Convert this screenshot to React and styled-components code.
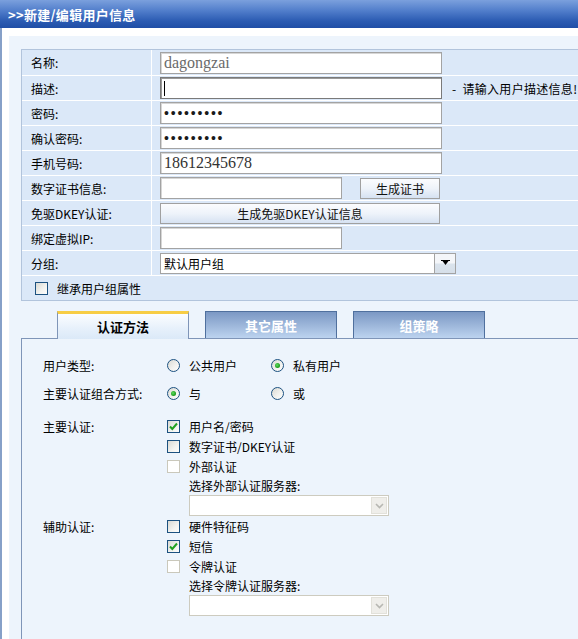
import React from 'react';
import styled, { createGlobalStyle, css } from 'styled-components';

const GlobalStyle = createGlobalStyle`
  html, body {
    margin: 0;
    padding: 0;
    background: #fff;
    overflow: hidden;
  }
  body {
    font-family: "Noto Sans CJK SC", "Liberation Sans", sans-serif;
    font-size: 12px;
    color: #000;
  }
`;

const Page = styled.div`
  width: 578px;
  overflow: hidden;
`;

const Header = styled.div`
  height: 28px;
  display: flex;
  align-items: center;
  padding-left: 8px;
  background: linear-gradient(#7ba0dd 0%, #4f7cca 40%, #2b5bb2 75%, #1f4ea6 100%);
  color: #fff;
  font-weight: bold;
  font-size: 13px;
  letter-spacing: 0.3px;
`;

const Frame = styled.div`
  border-left: 2px solid #86a0c8;
  padding: 8px 0 0 7px;
`;

const Panel = styled.div`
  background: #edf4fc;
  padding: 13px 0 10px 12px;
`;

const FormTable = styled.div`
  border: 1px solid #b2c4dc;
  border-right: none;
  background: #fff;
  display: flex;
  flex-direction: column;
  gap: 1px;
`;

const Row = styled.div`
  display: grid;
  grid-template-columns: ${p => (p.$full ? '1fr' : '129px 1fr')};
  column-gap: 1px;
  height: ${p => p.$h || 24}px;
`;

const LabelCell = styled.div`
  background: #dbe8f8;
  display: flex;
  align-items: center;
  padding-left: 9px;
`;

const ValueCell = styled.div`
  background: #dbe8f8;
  display: flex;
  align-items: center;
  padding-left: ${p => p.$pad ?? 8}px;
  min-width: 0;
`;

const Field = styled.div`
  box-sizing: border-box;
  flex: none;
  width: ${p => p.$w}px;
  height: 22px;
  background: #fff;
  border: 1px solid #a3a3a3;
  box-shadow: inset 1px 1px 0 #d6d6d6;
  display: flex;
  align-items: center;
  padding-left: 3px;
  font-family: "Liberation Serif", serif;
  font-size: 16px;
  color: ${p => p.$color || '#333'};
  ${p => p.$focus && css`
    border-color: #7a7a7a;
    box-shadow: inset 1px 1px 0 #9a9a9a;
  `}
`;

const Caret = styled.span`
  width: 1px;
  height: 15px;
  background: #000;
`;

const Dots = styled.span`
  font-family: "Liberation Sans", sans-serif;
  font-size: 14px;
  letter-spacing: 1.8px;
  color: #1a1a1a;
  line-height: 1;
`;

const Hint = styled.span`
  margin-left: 10px;
  white-space: nowrap;
  word-spacing: 3px;
  letter-spacing: 0.3px;
`;

const Button = styled.div`
  box-sizing: border-box;
  flex: none;
  width: ${p => p.$w}px;
  height: 21px;
  margin-left: ${p => p.$ml || 0}px;
  border: 1px solid #a0a0a0;
  background: linear-gradient(#fbfcfe 0%, #eef3fa 50%, #d6e2f2 100%);
  display: flex;
  align-items: center;
  justify-content: center;
  font-size: 12px;
  color: #111;
`;

const Select = styled.div`
  box-sizing: border-box;
  width: 296px;
  height: 21px;
  display: flex;
  border: 1px solid #a3a3a3;
  background: #fff;
`;

const SelectText = styled.div`
  flex: 1;
  display: flex;
  align-items: center;
  padding-left: 3px;
  font-size: 12px;
  border-right: 1px solid #a3a3a3;
`;

const SelectArrow = styled.div`
  width: 20px;
  display: flex;
  align-items: center;
  justify-content: center;
  background: linear-gradient(#f4f6f9 0%, #f4f6f9 45%, #dae3ec 55%, #d6dfe9 100%);
`;

const Box = styled.span`
  box-sizing: border-box;
  flex: none;
  width: 13px;
  height: 13px;
  border: 1px solid ${p => (p.$disabled ? '#cac8bb' : '#1c5180')};
  background: ${p => (p.$disabled ? '#fff' : 'linear-gradient(135deg, #d9d9d3 0%, #f3f3f0 60%, #fdfdfc 100%)')};
  display: flex;
  align-items: center;
  justify-content: center;
  border-radius: ${p => (p.$round ? '50%' : '0')};
`;

const Dot = styled.span`
  width: 5px;
  height: 5px;
  border-radius: 50%;
  background: radial-gradient(circle at 40% 40%, #5fdc5f 0%, #21a121 60%, #14801a 100%);
`;

const CheckInline = styled.div`
  display: flex;
  align-items: center;
  gap: 9px;
  padding-left: 13px;
  font-size: 12px;
`;

const TabStrip = styled.div`
  display: flex;
  gap: 16px;
  margin: 10px 0 0 36px;
  height: 27px;
`;

const Tab = styled.div`
  box-sizing: border-box;
  flex: none;
  width: 132px;
  height: 27px;
  display: flex;
  align-items: center;
  justify-content: center;
  font-weight: bold;
  font-size: 13px;
  border: 1px solid #50709e;
  border-bottom: none;
  background: linear-gradient(#7b98c4, #bcd3ef);
  color: #fff;
  ${p => p.$active && css`
    height: 28px;
    margin-bottom: -1px;
    position: relative;
    border-color: #7f95b8;
    border-top: 3px solid #f7cd45;
    background: linear-gradient(#fbfdff, #e6f0fb 60%, #dbe9f8);
    color: #000;
  `}
`;

const TabBody = styled.div`
  box-sizing: border-box;
  height: 302px;
  border: 1px solid #7f95b8;
  border-right: none;
  padding: 12px 0 0 21px;
`;

const Section = styled.div`
  display: grid;
  grid-template-columns: 124px 1fr;
  align-items: ${p => (p.$top ? 'start' : 'center')};
  min-height: ${p => p.$h || 0}px;
  margin-top: ${p => p.$mt || 0}px;
`;

const SectionLabel = styled.div`
  height: ${p => (p.$top ? '20px' : 'auto')};
  display: flex;
  align-items: center;
`;

const Options = styled.div`
  display: flex;
`;

const RadioOption = styled.div`
  width: 104px;
  display: flex;
  align-items: center;
  gap: 9px;
`;

const CheckList = styled.div`
  display: flex;
  flex-direction: column;
`;

const CheckRow = styled.div`
  height: 20px;
  display: flex;
  align-items: center;
  gap: 9px;
`;

const SubLabel = styled.div`
  height: 18px;
  display: flex;
  align-items: center;
  padding-left: 22px;
`;

const ServerSelect = styled.div`
  box-sizing: border-box;
  width: 200px;
  height: 21px;
  margin: 1px 0 0 22px;
  border: 1px solid #cdcbbf;
  background: #fff;
  display: flex;
  justify-content: flex-end;
  padding: 1px;
`;

const ServerArrow = styled.div`
  width: 16px;
  background: #efeeea;
  border: 1px solid #e2e1da;
  box-sizing: border-box;
  display: flex;
  align-items: center;
  justify-content: center;
`;

const CheckMark = () => (
  <svg width="11" height="11" viewBox="0 0 11 11">
    <path d="M2 5.5 L4.3 8 L9 2.5" fill="none" stroke="#21a121" strokeWidth="2" />
  </svg>
);

const Check = ({ checked, disabled }) => (
  <Box $disabled={disabled}>{checked && <CheckMark />}</Box>
);

const Radio = ({ checked }) => (
  <Box $round>{checked && <Dot />}</Box>
);

const DownTriangle = () => (
  <svg width="9" height="6" viewBox="0 0 9 6">
    <path d="M0 0 H9 V1 H0 Z M1.5 1 H7.5 L4.5 5 Z" fill="#000" />
  </svg>
);

const Chevron = () => (
  <svg width="9" height="6" viewBox="0 0 9 6">
    <path d="M1 1 L4.5 4.5 L8 1" fill="none" stroke="#b7b7b2" strokeWidth="1.6" />
  </svg>
);

const ServerPicker = () => (
  <ServerSelect>
    <ServerArrow>
      <Chevron />
    </ServerArrow>
  </ServerSelect>
);

const App = () => (
  <Page>
    <GlobalStyle />
    <Header>&gt;&gt;新建/编辑用户信息</Header>
    <Frame>
      <Panel>
        <FormTable>
          <Row $h={25}>
            <LabelCell>名称:</LabelCell>
            <ValueCell><Field $w={282} $color="#6a6a6a">dagongzai</Field></ValueCell>
          </Row>
          <Row>
            <LabelCell>描述:</LabelCell>
            <ValueCell>
              <Field $w={282} $focus><Caret /></Field>
              <Hint>- 请输入用户描述信息!</Hint>
            </ValueCell>
          </Row>
          <Row>
            <LabelCell>密码:</LabelCell>
            <ValueCell><Field $w={282}><Dots>•••••••••</Dots></Field></ValueCell>
          </Row>
          <Row>
            <LabelCell>确认密码:</LabelCell>
            <ValueCell><Field $w={282}><Dots>•••••••••</Dots></Field></ValueCell>
          </Row>
          <Row>
            <LabelCell>手机号码:</LabelCell>
            <ValueCell><Field $w={282}>18612345678</Field></ValueCell>
          </Row>
          <Row>
            <LabelCell>数字证书信息:</LabelCell>
            <ValueCell>
              <Field $w={182} />
              <Button $w={80} $ml={18}>生成证书</Button>
            </ValueCell>
          </Row>
          <Row>
            <LabelCell>免驱DKEY认证:</LabelCell>
            <ValueCell><Button $w={280}>生成免驱DKEY认证信息</Button></ValueCell>
          </Row>
          <Row>
            <LabelCell>绑定虚拟IP:</LabelCell>
            <ValueCell><Field $w={182} /></ValueCell>
          </Row>
          <Row>
            <LabelCell>分组:</LabelCell>
            <ValueCell>
              <Select>
                <SelectText>默认用户组</SelectText>
                <SelectArrow><DownTriangle /></SelectArrow>
              </Select>
            </ValueCell>
          </Row>
          <Row $full>
            <ValueCell $pad={0}>
              <CheckInline><Check />继承用户组属性</CheckInline>
            </ValueCell>
          </Row>
        </FormTable>

        <TabStrip>
          <Tab $active>认证方法</Tab>
          <Tab>其它属性</Tab>
          <Tab>组策略</Tab>
        </TabStrip>

        <TabBody>
          <Section $h={28}>
            <SectionLabel>用户类型:</SectionLabel>
            <Options>
              <RadioOption><Radio />公共用户</RadioOption>
              <RadioOption><Radio checked />私有用户</RadioOption>
            </Options>
          </Section>
          <Section $h={28}>
            <SectionLabel>主要认证组合方式:</SectionLabel>
            <Options>
              <RadioOption><Radio checked />与</RadioOption>
              <RadioOption><Radio />或</RadioOption>
            </Options>
          </Section>
          <Section $top $mt={9}>
            <SectionLabel $top>主要认证:</SectionLabel>
            <CheckList>
              <CheckRow><Check checked />用户名/密码</CheckRow>
              <CheckRow><Check />数字证书/DKEY认证</CheckRow>
              <CheckRow><Check disabled />外部认证</CheckRow>
              <SubLabel>选择外部认证服务器:</SubLabel>
              <ServerPicker />
            </CheckList>
          </Section>
          <Section $top>
            <SectionLabel $top>辅助认证:</SectionLabel>
            <CheckList>
              <CheckRow><Check />硬件特征码</CheckRow>
              <CheckRow><Check checked />短信</CheckRow>
              <CheckRow><Check disabled />令牌认证</CheckRow>
              <SubLabel>选择令牌认证服务器:</SubLabel>
              <ServerPicker />
            </CheckList>
          </Section>
        </TabBody>
      </Panel>
    </Frame>
  </Page>
);

export default App;
